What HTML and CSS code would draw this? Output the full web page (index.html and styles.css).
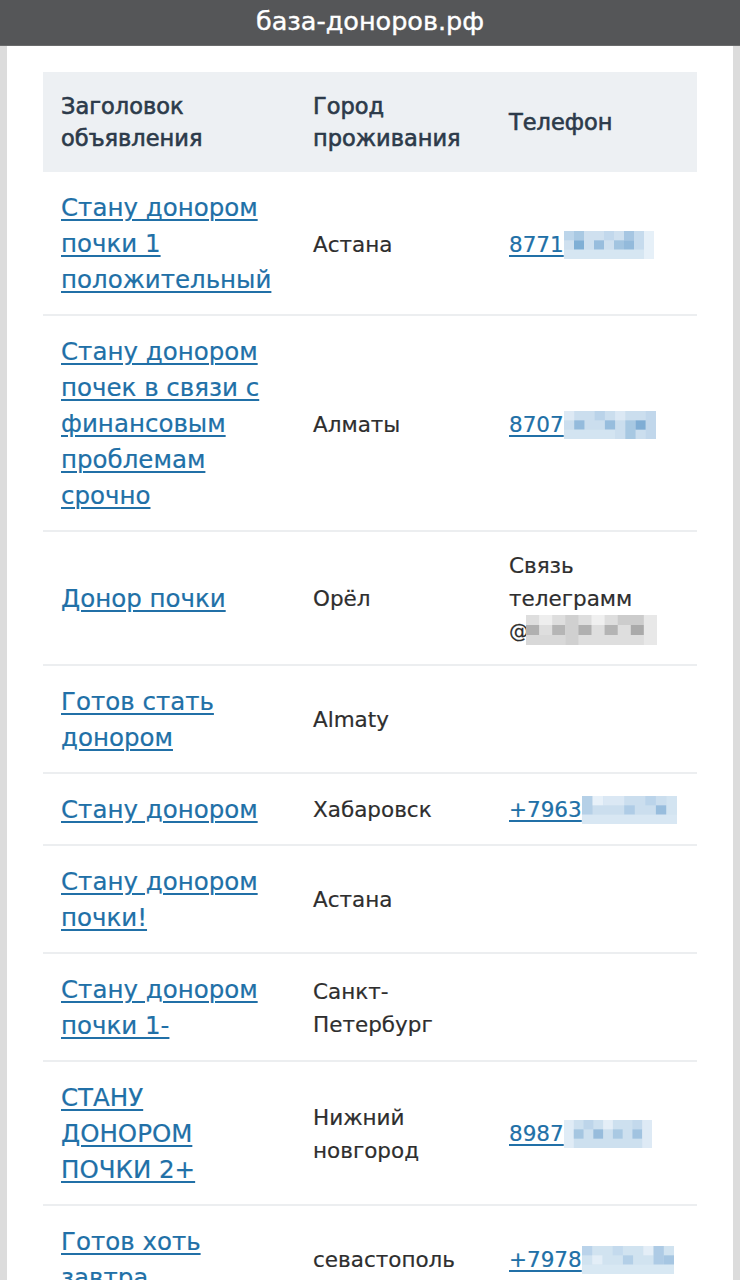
FILE: index.html
```html
<!DOCTYPE html>
<html lang="ru">
<head>
<meta charset="utf-8">
<title>база-доноров.рф</title>
<link rel="stylesheet" href="styles.css">
</head>
<body>
<header class="topbar">база-доноров.рф</header>
<main class="page">
  <table class="ads">
    <colgroup>
      <col class="c-title">
      <col class="c-city">
      <col class="c-phone">
    </colgroup>
    <thead>
      <tr>
        <th>Заголовок объявления</th>
        <th>Город проживания</th>
        <th>Телефон</th>
      </tr>
    </thead>
    <tbody>
      <tr>
        <td><a href="#">Стану донором почки 1 положительный</a></td>
        <td>Астана</td>
        <td><a class="phone" href="#">8771<svg class="mosaic" width="90" height="28" viewBox="0 0 9 3" preserveAspectRatio="none"><rect width="9" height="3" fill="#cfe0ef"/><rect x="0" y="0" width="1" height="1" fill="#bcd5ea"/><rect x="1" y="0" width="1" height="1" fill="#a9c9e3"/><rect x="1" y="1" width="1" height="1" fill="#80afd5"/><rect x="3" y="1" width="1" height="1" fill="#98bddd"/><rect x="4" y="0" width="1" height="1" fill="#c2d8ec"/><rect x="5" y="1" width="1" height="1" fill="#a2c4e0"/><rect x="6" y="0" width="1" height="1" fill="#a6c6e2"/><rect x="6" y="1" width="1" height="1" fill="#93badb"/><rect x="7" y="0" width="1" height="2" fill="#c6dbed"/><rect x="8" y="0" width="1" height="3" fill="#e6f0f8"/><rect x="0" y="2" width="8" height="1" fill="#d6e6f2"/></svg></a></td>
      </tr>
      <tr>
        <td><a href="#">Стану донором почек в связи с финансовым проблемам срочно</a></td>
        <td>Алматы</td>
        <td><a class="phone" href="#">8707<svg class="mosaic" width="92" height="28" viewBox="0 0 9 3" preserveAspectRatio="none"><rect width="9" height="3" fill="#cbdeee"/><rect x="0" y="0" width="1" height="1" fill="#dde9f4"/><rect x="1" y="1" width="1" height="1" fill="#94bbdc"/><rect x="3" y="0" width="1" height="1" fill="#bad3e9"/><rect x="4" y="1" width="1" height="1" fill="#97bddd"/><rect x="5" y="0" width="1" height="1" fill="#dbe8f4"/><rect x="6" y="1" width="1" height="2" fill="#a7c8e2"/><rect x="7" y="1" width="1" height="1" fill="#7fadd4"/><rect x="8" y="0" width="1" height="3" fill="#c1d7eb"/><rect x="0" y="2" width="5" height="1" fill="#d3e4f1"/></svg></a></td>
      </tr>
      <tr>
        <td><a href="#">Донор почки</a></td>
        <td>Орёл</td>
        <td class="tight">Связь телеграмм <span class="nick"><span class="at">@</span><svg class="mosaic" width="131" height="30" viewBox="0 0 10 3" preserveAspectRatio="none"><rect width="10" height="3" fill="#dedede"/><rect x="0" y="1" width="1" height="1" fill="#b0b0b0"/><rect x="1" y="0" width="1" height="1" fill="#eeeeee"/><rect x="2" y="1" width="1" height="1" fill="#b5b5b5"/><rect x="3" y="0" width="1" height="3" fill="#d0d0d0"/><rect x="4" y="1" width="1" height="1" fill="#b0b0b0"/><rect x="5" y="0" width="1" height="1" fill="#f0f0f0"/><rect x="6" y="1" width="1" height="1" fill="#b4b4b4"/><rect x="7" y="0" width="2" height="1" fill="#cccccc"/><rect x="8" y="1" width="1" height="1" fill="#aaaaaa"/><rect x="9" y="0" width="1" height="3" fill="#e8e8e8"/><rect x="0" y="2" width="3" height="1" fill="#d8d8d8"/></svg></span></td>
      </tr>
      <tr>
        <td><a href="#">Готов стать донором</a></td>
        <td>Almaty</td>
        <td></td>
      </tr>
      <tr>
        <td><a href="#">Стану донором</a></td>
        <td>Хабаровск</td>
        <td><a class="phone" href="#">+7963<svg class="mosaic" width="95" height="28" viewBox="0 0 9 3" preserveAspectRatio="none"><rect width="9" height="3" fill="#cbdeee"/><rect x="0" y="0" width="1" height="2" fill="#b5d0e7"/><rect x="1" y="0" width="1" height="1" fill="#e8f1f9"/><rect x="2" y="0" width="2" height="1" fill="#dbe8f4"/><rect x="4" y="1" width="1" height="1" fill="#afcce6"/><rect x="6" y="0" width="1" height="1" fill="#bbd4ea"/><rect x="7" y="1" width="1" height="1" fill="#98bddd"/><rect x="8" y="0" width="1" height="3" fill="#d3e4f1"/><rect x="0" y="2" width="9" height="1" fill="#d8e7f3"/></svg></a></td>
      </tr>
      <tr>
        <td><a href="#">Стану донором почки!</a></td>
        <td>Астана</td>
        <td></td>
      </tr>
      <tr>
        <td><a href="#">Стану донором почки 1-</a></td>
        <td>Санкт-Петербург</td>
        <td></td>
      </tr>
      <tr>
        <td><a href="#">СТАНУ ДОНОРОМ ПОЧКИ 2+</a></td>
        <td>Нижний новгород</td>
        <td><a class="phone" href="#">8987<svg class="mosaic" width="88" height="28" viewBox="0 0 9 3" preserveAspectRatio="none"><rect width="9" height="3" fill="#cde0ef"/><rect x="0" y="0" width="1" height="3" fill="#e0ecf6"/><rect x="1" y="1" width="1" height="1" fill="#a5c6e1"/><rect x="2" y="0" width="1" height="1" fill="#bdd5ea"/><rect x="3" y="1" width="1" height="1" fill="#97bcdc"/><rect x="4" y="0" width="1" height="1" fill="#e4eef7"/><rect x="5" y="1" width="1" height="1" fill="#a9c9e3"/><rect x="7" y="0" width="1" height="1" fill="#c3d9ec"/><rect x="7" y="1" width="1" height="1" fill="#a1c3e0"/><rect x="8" y="0" width="1" height="3" fill="#deeaf5"/></svg></a></td>
      </tr>
      <tr>
        <td><a href="#">Готов хоть завтра</a></td>
        <td>севастополь</td>
        <td><a class="phone" href="#">+7978<svg class="mosaic" width="92" height="28" viewBox="0 0 9 3" preserveAspectRatio="none"><rect width="9" height="3" fill="#d1e3f0"/><rect x="0" y="0" width="1" height="1" fill="#bad3ea"/><rect x="1" y="1" width="1" height="1" fill="#e3eef7"/><rect x="3" y="0" width="1" height="1" fill="#c4daed"/><rect x="4" y="1" width="1" height="1" fill="#b3cfe7"/><rect x="6" y="0" width="1" height="1" fill="#e4eef7"/><rect x="7" y="0" width="1" height="2" fill="#aecbe5"/><rect x="8" y="1" width="1" height="1" fill="#a6c6e2"/><rect x="0" y="2" width="9" height="1" fill="#d8e8f3"/></svg></a></td>
      </tr>
    </tbody>
  </table>
</main>
</body>
</html>
```

FILE: styles.css
```css
html, body {
  margin: 0;
  padding: 0;
}

body {
  background: #dcdcdc;
  font-family: "DejaVu Sans", "Liberation Sans", sans-serif;
  color: #333333;
}

.topbar {
  height: 46px;
  background: #555658;
  color: #ffffff;
  font-size: 25.5px;
  line-height: 42px;
  text-align: center;
  border-bottom: 1px solid #6a6b6c;
  box-sizing: border-box;
  -webkit-text-stroke: 0.4px #ffffff;
}

.page {
  background: #ffffff;
  margin: 0 7px;
  padding: 26px 36px 40px;
}

.ads {
  width: 100%;
  border-collapse: collapse;
  table-layout: fixed;
}

.c-title { width: 252px; }
.c-city { width: 196px; }
.c-phone { width: 206px; }

.ads th {
  background: #edf0f3;
  color: #2c3a4a;
  font-weight: normal;
  font-size: 22.5px;
  line-height: 32px;
  text-align: left;
  padding: 18px 18px;
  vertical-align: middle;
  -webkit-text-stroke: 0.6px #2c3a4a;
}

.ads td {
  padding: 18px 18px 16px;
  border-bottom: 2px solid #eceef0;
  vertical-align: middle;
  font-size: 21.5px;
  line-height: 33px;
  color: #2e2e2e;
  -webkit-text-stroke: 0.2px #2e2e2e;
}

.ads td.tight {
  line-height: 32.5px;
}

.ads td a {
  color: #2170a7;
  text-decoration: underline;
  text-decoration-thickness: 2px;
  text-underline-offset: 3px;
  font-size: 24.5px;
  line-height: 36px;
  -webkit-text-stroke: 0.2px #2170a7;
}

.ads td a.phone {
  font-size: 21.5px;
  line-height: 33px;
  white-space: nowrap;
}

.nick {
  white-space: nowrap;
}

.at {
  font-size: 20px;
  letter-spacing: -3px;
}

.mosaic {
  display: inline-block;
  vertical-align: -7px;
}
```
